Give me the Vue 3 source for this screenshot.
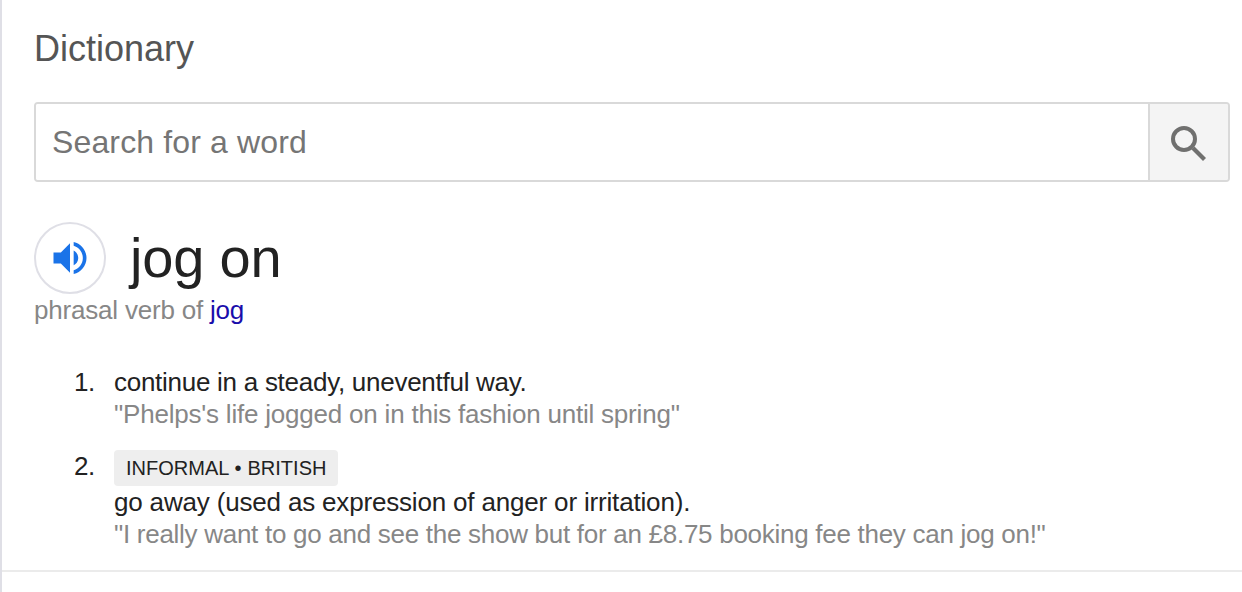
<template>
  <main class="dictionary">
    <h1 class="title">Dictionary</h1>

    <form class="search" @submit.prevent>
      <input v-model="query" type="text" placeholder="Search for a word" aria-label="Search for a word" />
      <button type="submit" aria-label="Search">
        <svg width="80" height="76" viewBox="0 0 80 76" fill="none" stroke="#70706f" stroke-width="4">
          <circle cx="34" cy="35" r="11" />
          <path d="M43 44 54.5 55.5" stroke-width="4.2" />
        </svg>
      </button>
    </form>

    <div class="headword">
      <button type="button" class="listen" aria-label="Listen">
        <svg width="44" height="44" viewBox="0 0 24 24" fill="#1a73e8">
          <path d="M3 9v6h4l5 5V4L7 9H3zm13.5 3c0-1.77-1.02-3.29-2.5-4.03v8.05c1.48-.73 2.5-2.25 2.5-4.02zM14 3.23v2.06c2.89.86 5 3.54 5 6.71s-2.11 5.85-5 6.71v2.06c4.01-.91 7-4.49 7-8.77s-2.99-7.86-7-8.77z" />
        </svg>
      </button>
      <h2>jog on</h2>
    </div>
    <p class="origin">phrasal verb of <a href="#">jog</a></p>

    <ol class="senses">
      <li v-for="(sense, index) in senses" :key="index">
        <span class="number">{{ index + 1 }}.</span>
        <div>
          <span v-if="sense.labels" class="labels">{{ sense.labels.join(' • ') }}</span>
          <p class="definition">{{ sense.definition }}</p>
          <p class="example">"{{ sense.example }}"</p>
        </div>
      </li>
    </ol>
  </main>
</template>

<script setup>
import { ref } from 'vue';

const query = ref('');

const senses = [
  {
    definition: 'continue in a steady, uneventful way.',
    example: "Phelps's life jogged on in this fashion until spring"
  },
  {
    labels: ['INFORMAL', 'BRITISH'],
    definition: 'go away (used as expression of anger or irritation).',
    example: 'I really want to go and see the show but for an £8.75 booking fee they can jog on!'
  }
];
</script>

<style>
body {
  background: #fff;
  overflow: hidden;
}
</style>

<style scoped>
.dictionary {
  box-sizing: border-box;
  height: 592px;
  padding: 28px 12px 0 32px;
  border-left: 2px solid #dfdfe6;
  font-family: "Liberation Sans", Arial, sans-serif;
  font-size: 26px;
  line-height: 32px;
  color: #222;
}

h1,
h2,
p,
ol {
  margin: 0;
  padding: 0;
  font-weight: 400;
}

.title {
  font-size: 36px;
  line-height: 42px;
  color: #555;
}

.search {
  display: flex;
  box-sizing: border-box;
  height: 80px;
  margin-top: 32px;
  border: 2px solid #d9d9d9;
  border-radius: 4px;
  overflow: hidden;
}

.search input {
  flex: 1;
  min-width: 0;
  padding: 0 16px;
  border: none;
  outline: none;
  background: #fff;
  font: 32px "Liberation Sans", Arial, sans-serif;
  letter-spacing: 0.14px;
  color: #222;
}

.search input::placeholder {
  color: #757575;
}

.search button {
  box-sizing: border-box;
  width: 80px;
  padding: 0;
  border: none;
  border-left: 2px solid #d9d9d9;
  background: #f4f4f4;
  cursor: pointer;
}

.search svg {
  display: block;
}

.headword {
  display: flex;
  align-items: center;
  gap: 24px;
  height: 72px;
  margin-top: 40px;
}

.listen {
  display: grid;
  place-items: center;
  box-sizing: border-box;
  width: 72px;
  height: 72px;
  padding: 0;
  border: 2px solid #dfdfe6;
  border-radius: 50%;
  background: #fff;
  cursor: pointer;
}

.headword h2 {
  font-size: 56px;
  line-height: 72px;
  letter-spacing: -0.2px;
}

.origin {
  letter-spacing: -0.2px;
  color: #878787;
}

.origin a {
  color: #1a0dab;
  text-decoration: none;
}

.senses {
  margin: 40px -12px 0 -32px;
  padding: 0 0 20px 72px;
  border-bottom: 2px solid #ebebeb;
  list-style: none;
}

.senses li {
  display: flex;
}

.senses li + li {
  margin-top: 20px;
}

.number {
  flex: none;
  width: 40px;
  letter-spacing: -0.4px;
}

.labels {
  display: block;
  width: fit-content;
  padding: 0 12px;
  border-radius: 4px;
  background: #eee;
  font-size: 20px;
  line-height: 36px;
  word-spacing: 0.4px;
}

.definition {
  letter-spacing: -0.27px;
}

.example {
  letter-spacing: -0.21px;
  color: #878787;
}

li + li .definition {
  letter-spacing: -0.175px;
}

li + li .example {
  letter-spacing: -0.28px;
}
</style>
